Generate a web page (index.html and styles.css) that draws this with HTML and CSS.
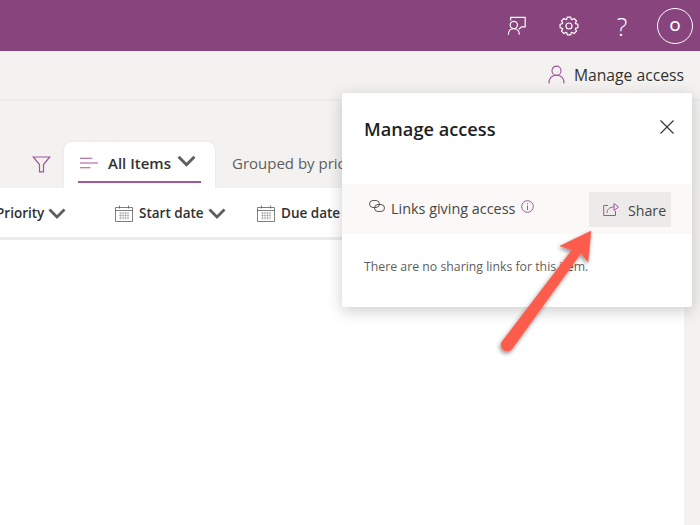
FILE: index.html
```html
<!DOCTYPE html>
<html>
	<head>
		<meta charset="UTF-8">
		<title>Manage access</title>
		<link rel="stylesheet" href="styles.css">
	</head>
	<body>
		<header class="topbar">
			<svg class="top-icon" viewBox="0 0 22 22"><path d="M4 5V1.500H20V12H16L13 14.500"/><circle cx="7.500" cy="10" r="4"/><path d="M1.500 20.500c0-4 2.500-6.500 6-6.500s6 2.500 6 6.500"/></svg>
			<svg class="top-icon gear" viewBox="0 0 22 22"><path d="M8.400 3.860L9.090 1.180H12.910L13.600 3.860L14.210 4.110L16.590 2.710L19.290 5.410L17.890 7.790L18.140 8.400L20.820 9.090V12.910L18.140 13.600L17.890 14.210L19.290 16.590L16.590 19.290L14.210 17.890L13.600 18.140L12.910 20.820H9.090L8.400 18.140L7.790 17.890L5.410 19.290L2.710 16.590L4.110 14.210L3.860 13.600L1.180 12.910V9.090L3.860 8.400L4.110 7.790L2.710 5.410L5.410 2.710L7.790 4.110Z"/><circle cx="11" cy="11" r="3.300"/></svg>
			<span class="help">?</span>
			<span class="avatar">O</span>
		</header>

		<div class="commandbar">
			<svg class="person" viewBox="0 0 18 20"><circle cx="9" cy="6" r="4.800"/><path d="M1 19.500c0-5.500 3.200-8.700 8-8.700s8 3.200 8 8.700"/></svg>
			<span>Manage access</span>
		</div>

		<main class="content">
			<div class="tabs">
				<svg class="filter" viewBox="0 0 18 17"><path d="M.8 1H17.200L11 8.500V15.800H7V8.500Z"/></svg>
				<div class="tab active">
					<svg class="lines" viewBox="0 0 19 13"><path d="M0 1H13M0 6H19M0 11H11"/></svg>
					<b>All Items</b>
					<svg class="chev large" viewBox="0 0 18 11"><path d="M1.500 1.500L9 9L16.500 1.500"/></svg>
				</div>
				<span class="tab-other">Grouped by priority</span>
			</div>
			<div class="columns">
				<div class="col col-priority"><span>Priority</span><svg class="chev" viewBox="0 0 18 11"><path d="M1.500 1.500L9 9L16.500 1.500"/></svg></div>
				<div class="col col-date">
					<svg class="cal" viewBox="0 0 18 17"><path d="M.5 2.500h17v14H.5zM.5 5.500h17M4.500 .5v3M13.500 .5v3"/><path class="dots" d="M4 8h10M4 10.500h10M4 13h10M5.500 7v7.500M8 7v7.500M10.500 7v7.500M13 7v7.500"/></svg>
					<span>Start date</span>
					<svg class="chev" viewBox="0 0 18 11"><path d="M1.500 1.500L9 9L16.500 1.500"/></svg>
				</div>
				<div class="col">
					<svg class="cal" viewBox="0 0 18 17"><path d="M.5 2.500h17v14H.5zM.5 5.500h17M4.500 .5v3M13.500 .5v3"/><path class="dots" d="M4 8h10M4 10.500h10M4 13h10M5.500 7v7.500M8 7v7.500M10.500 7v7.500M13 7v7.500"/></svg>
					<span>Due date</span>
				</div>
			</div>
			<div class="list"></div>
		</main>

		<section class="panel">
			<div class="panel-head">
				<h2>Manage access</h2>
				<svg class="close" viewBox="0 0 14 14"><path d="M.5 .5L13.500 13.500M13.500 .5L.5 13.500"/></svg>
			</div>
			<div class="links-row">
				<svg class="link-icon" viewBox="0 0 16 12"><rect x=".5" y=".5" width="10" height="7" rx="3.500"/><rect x="5.500" y="4.500" width="10" height="7" rx="3.500"/></svg>
				<span>Links giving access</span>
				<svg class="info" viewBox="0 0 13 13"><circle cx="6.500" cy="6.500" r="5.800"/><path d="M6.500 5.500V10M6.500 3V4.200"/></svg>
				<div class="share">
					<svg class="share-icon" viewBox="0 0 16 15"><path d="M5 3.500H.7V13.500H12.500V9"/><path d="M4 11c0-3.500 2.500-6 7-6V8.500L15.500 5 11 1.500V5"/></svg>
					<span>Share</span>
				</div>
			</div>
			<p class="empty">There are no sharing links for this item.</p>
		</section>

		<svg class="arrow" viewBox="0 0 700 525">
			<defs>
				<filter id="arrow-shadow" x="-30%" y="-30%" width="160%" height="160%"><feDropShadow dx="-1" dy="2" stdDeviation="2" flood-color="#000" flood-opacity=".45"/></filter>
			</defs>
			<path filter="url(#arrow-shadow)" d="M572 250L502.500 341A6 6 0 0 0 512 349L581 253L588 262L591 231L560 246Z" fill="#fc5b4c" stroke="#fc5b4c" stroke-width=".5" stroke-linejoin="round"/>
		</svg>
	</body>
</html>
```

FILE: styles.css
```css
* {
	margin: 0;
	padding: 0;
	box-sizing: border-box;
}

body {
	width: 700px;
	height: 525px;
	overflow: hidden;
	position: relative;
	background: #f3f2f1;
	font-family: "Open Sans", "Liberation Sans", sans-serif;
	color: #323130;
}

svg {
	fill: none;
	flex: none;
}

.topbar {
	height: 51px;
	background: #88447c;
	display: flex;
	align-items: center;
	justify-content: flex-end;
	padding-right: 7px;
	color: #fff;
}

.top-icon {
	width: 20px;
	height: 20px;
	stroke: #fff;
	stroke-width: 1.300;
	margin-right: 32px;
	stroke-linejoin: round;
}

.top-icon.gear {
	margin-right: 33px;
}

.help {
	font-size: 25px;
	font-weight: 300;
	line-height: 30px;
	width: 20px;
	text-align: center;
	margin-right: 25px;
}

.avatar {
	width: 36px;
	height: 36px;
	border: 1px solid #fff;
	border-radius: 50%;
	display: flex;
	align-items: center;
	justify-content: center;
	font-size: 14px;
	font-weight: 600;
}

.commandbar {
	height: 50px;
	display: flex;
	align-items: center;
	justify-content: flex-end;
	padding: 0 16px 1px 0;
	border-bottom: 2px solid #ecebea;
	font-size: 15.700px;
	gap: 9px;
}

.person {
	width: 17px;
	height: 19px;
	stroke: #a2559a;
	stroke-width: 1.200;
}

.content {
	height: 424px;
	margin-right: 16px;
	display: flex;
	flex-direction: column;
}

.tabs {
	height: 87px;
	padding: 41px 0 0 32px;
	display: flex;
	align-items: flex-start;
	white-space: nowrap;
}

.filter {
	width: 19px;
	height: 17px;
	margin-top: 14px;
	stroke: #a2559a;
	stroke-width: 1.200;
}

.tab {
	width: 151px;
	height: 46px;
	margin-left: 13px;
	background: #fff;
	border-radius: 8px 8px 0 0;
	position: relative;
	display: flex;
	align-items: center;
	box-shadow: 0 0 3px rgba(0, 0, 0, .07);
}

.tab.active {
	padding: 0 0 4px 16px;
	font-size: 15px;
}

.tab.active b {
	margin-left: 10px;
	font-weight: 600;
}

.tab.active::after {
	content: "";
	position: absolute;
	left: 14px;
	right: 14px;
	bottom: 5px;
	height: 2.500px;
	background: #a2559a;
}

.lines {
	width: 18px;
	height: 13px;
	stroke: #a2559a;
	stroke-width: 1.200;
}

.chev {
	width: 18px;
	height: 11px;
	stroke: #605e5c;
	stroke-width: 2.800;
	margin-left: 4px;
}

.chev.large {
	width: 19px;
	height: 12px;
	margin: -5px 0 0 6px;
}

.tab-other {
	margin: 11px 0 0 17px;
	font-size: 15px;
	color: #605e5c;
}

.columns {
	height: 52px;
	padding-top: 1px;
	background: #fff;
	display: flex;
	align-items: center;
	font-size: 13.500px;
	font-weight: 600;
	white-space: nowrap;
	border-bottom: 3px solid #edebe9;
	position: relative;
}

.col {
	display: flex;
	align-items: center;
}

.col-priority {
	margin-left: -4px;
	width: 119px;
}

.col-date {
	width: 142px;
}

.col span {
	margin-left: 6px;
}

.col-priority span {
	margin-left: 0;
}

.cal {
	width: 18px;
	height: 17px;
	stroke: #605e5c;
	stroke-width: .8;
}

.cal .dots {
	stroke: #a19f9d;
	stroke-width: .6;
}

.list {
	flex: 1;
	background: #fff;
}

.panel {
	position: absolute;
	left: 342px;
	top: 93px;
	width: 350px;
	height: 214px;
	background: #fff;
	box-shadow: 0 4px 16px rgba(0, 0, 0, .2);
	border-radius: 2px;
	display: flex;
	flex-direction: column;
}

.panel-head {
	height: 91px;
	display: flex;
	justify-content: space-between;
	padding: 24px 18px 0 22px;
}

.panel-head h2 {
	font-size: 18.200px;
	font-weight: 600;
	color: #201f1e;
	line-height: 24px;
}

.close {
	width: 14px;
	height: 14px;
	margin-top: 3px;
	stroke: #323130;
	stroke-width: 1.100;
}

.links-row {
	height: 50px;
	background: #faf9f8;
	display: flex;
	align-items: flex-start;
	padding: 8px 21px 0 27px;
	font-size: 14.400px;
	color: #484644;
}

.link-icon {
	width: 16px;
	height: 12px;
	margin-top: 8px;
	stroke: #484644;
	stroke-width: .9;
}

.links-row > span {
	margin: 7px 0 0 6px;
	line-height: 20px;
}

.info {
	width: 13px;
	height: 13px;
	margin: 8px 0 0 6px;
	stroke: #a2559a;
	stroke-width: 1;
}

.share {
	margin-left: auto;
	width: 82px;
	height: 35px;
	background: #edebe9;
	display: flex;
	align-items: center;
	padding: 1px 0 0 14px;
	gap: 9px;
	font-size: 14.200px;
}

.share-icon {
	width: 16px;
	height: 15px;
	margin-top: -2px;
	stroke: #a2559a;
	stroke-width: 1;
}

.empty {
	margin: 24px 0 0 22px;
	font-size: 12.300px;
	line-height: 18px;
	color: #605e5c;
}

.arrow {
	position: absolute;
	left: 0;
	top: 0;
	width: 700px;
	height: 525px;
}
```
